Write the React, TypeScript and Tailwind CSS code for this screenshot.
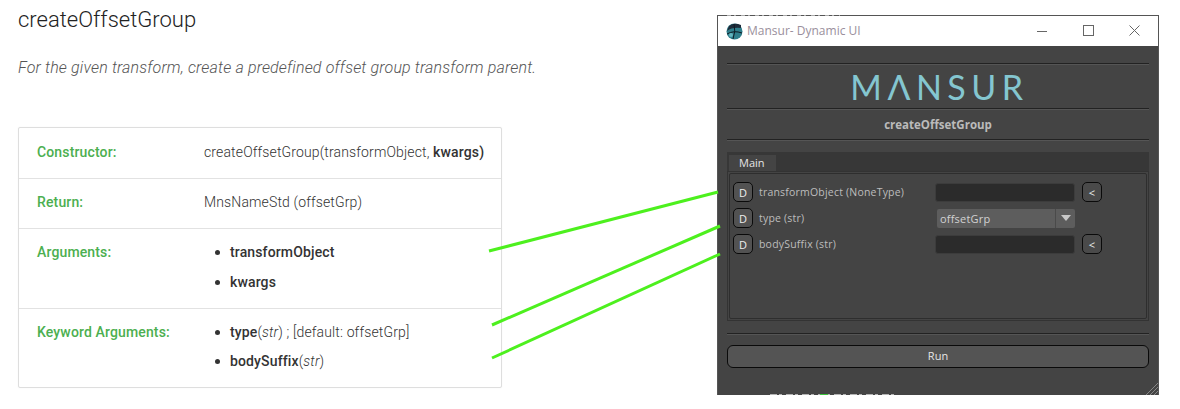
const roboto = "font-['Roboto',sans-serif]";
const ui = "font-['Open_Sans',sans-serif]";

function Bullet({ children }: { children: React.ReactNode }) {
  return (
    <li className="flex items-center h-[20px]">
      <span className="w-[5px] h-[5px] rounded-full bg-[#333] ml-[-2px] mr-[10px]" />
      <span>{children}</span>
    </li>
  );
}

function DocRow({ label, height, top, children, border = true }: { label: string; height: string; top: string; children: React.ReactNode; border?: boolean }) {
  return (
    <div className={`flex pl-[18px] ${height} ${top} ${border ? "border-b border-[#e2e2e2]" : ""}`}>
      <div className="w-[167px] shrink-0 text-[14px] leading-[20px] tracking-[0.14px] font-medium text-[#4caf50]">{label}</div>
      <div className="text-[14px] leading-[20px] tracking-[0.14px] font-light text-[#333]">{children}</div>
    </div>
  );
}

function DocPanel() {
  return (
    <section className={`w-[717px] shrink-0 pl-[18px] ${roboto}`}>
      <h1 className="mt-[7px] text-[22px] leading-[26px] font-light text-[#222]">createOffsetGroup</h1>
      <p className="mt-[23px] text-[16px] leading-[24px] tracking-[0.16px] font-light italic text-[#555]">
        For the given transform, create a predefined offset group transform parent.
      </p>
      <div className="mt-[47px] w-[484px] h-[261px] border border-[#dedede] rounded-[2px] shadow-[0_0_1px_rgba(0,0,0,0.1)]">
        <DocRow label="Constructor:" height="h-[51px]" top="pt-[14px]">
          createOffsetGroup(transformObject, <b className="font-medium">kwargs)</b>
        </DocRow>
        <DocRow label="Return:" height="h-[50px]" top="pt-[13px]">
          MnsNameStd (offsetGrp)
        </DocRow>
        <DocRow label="Arguments:" height="h-[80px]" top="pt-[13px]">
          <ul className="flex flex-col gap-[10px] pl-[13px] font-medium">
            <Bullet>transformObject</Bullet>
            <Bullet>kwargs</Bullet>
          </ul>
        </DocRow>
        <DocRow label="Keyword Arguments:" height="h-[78px]" top="pt-[13px]" border={false}>
          <ul className="flex flex-col gap-[9px] pl-[13px]">
            <Bullet>
              <b className="font-medium">type</b>(<i>str</i>) ; [default: offsetGrp]
            </Bullet>
            <Bullet>
              <b className="font-medium">bodySuffix</b>(<i>str</i>)
            </Bullet>
          </ul>
        </DocRow>
      </div>
    </section>
  );
}

function Sep({ className }: { className: string }) {
  return <div className={`h-[2px] border-t border-[#222] bg-[#555] ${className}`} />;
}

function DButton() {
  return (
    <button className="w-[20px] h-[20px] shrink-0 rounded-[5px] border border-[#0a0a0a] bg-[#525252] text-[11px] leading-none text-[#eee]">D</button>
  );
}

function ArrowButton() {
  return (
    <button className="ml-[7px] w-[20px] h-[20px] rounded-[5px] border border-[#0a0a0a] bg-[#4a4a4a] text-[11px] leading-none text-[#eee]">&lt;</button>
  );
}

function ParamRow({ label, children }: { label: string; children: React.ReactNode }) {
  return (
    <div className="flex items-center h-[20px]">
      <DButton />
      <span className="ml-[6px] w-[177px] pt-[2px] text-[10.5px] tracking-[0.2px] text-[#bdbdbd]">{label}</span>
      {children}
    </div>
  );
}

function TextField() {
  return <div className="ml-[-1px] w-[140px] h-[19px] rounded-[3px] border border-[#3c3c3c] bg-[#2b2b2b]" />;
}

function TitleBar() {
  return (
    <div className="h-[30px] bg-white flex items-center pl-[8px]">
      <svg width="17" height="17" viewBox="0 0 17 17">
        <circle cx="8.5" cy="8.5" r="8" fill="#2f7f8c" />
        <path d="M1 8 Q6 4 15 5 L15 2 Q8 -1 3 3Z" fill="#1d2b3a" />
        <path d="M8 1 Q10 8 7 16 M1 11 Q8 7 16 10" stroke="#0d1a24" strokeWidth="1" fill="none" />
        <circle cx="5" cy="12" r="2" fill="#63b5bf" />
      </svg>
      <span className="ml-[4px] text-[12px] text-[#9a8f9c] font-['Open_Sans',sans-serif]">Mansur- Dynamic UI</span>
      <div className="ml-auto flex items-center">
        <svg width="46" height="12" viewBox="0 0 46 12" stroke="#666" fill="none"><path d="M0 6.5H10" /></svg>
        <svg width="46" height="12" viewBox="0 0 46 12" stroke="#666" fill="none"><rect x="0.5" y="0.5" width="10" height="10" /></svg>
        <svg width="29" height="12" viewBox="0 0 29 12" stroke="#666" fill="none"><path d="M0.5 0.5L10.5 10.5M10.5 0.5L0.5 10.5" /></svg>
      </div>
    </div>
  );
}

function DynamicUiWindow() {
  return (
    <section className={`relative mt-[15px] w-[442px] h-[380px] border border-[#555] border-b-0 bg-[#444] ${ui}`}>
      <TitleBar />
      <div className="px-[9px] pt-[17px]">
        <Sep className="" />
        <div className="h-[43px] flex items-center justify-center">
          <span aria-label="MANSUR" className="ml-[3px] font-['Lato',sans-serif] font-normal text-[34px] leading-none tracking-[5.5px] text-[#84c6d0]">MΛNSUR</span>
        </div>
        <Sep className="" />
        <div className="h-[29px] flex items-center justify-center text-[11.5px] font-bold text-[#bbb]">createOffsetGroup</div>
        <Sep className="" />
        <div className="mt-[11px] h-[19px] bg-[#373737] pl-[2px] flex items-end">
          <div className="w-[47px] h-[16px] bg-[#444] text-[11px] leading-[16px] pl-[10px] text-[#e4e4e4]">Main</div>
        </div>
        <div className="h-[150px] border border-[#333] p-[1px]">
          <div className="h-full border border-[#2e2e2e] pl-[3px] pt-[8px] flex flex-col gap-[6px] rounded-[2px]">
            <ParamRow label="transformObject (NoneType)">
              <TextField />
              <ArrowButton />
            </ParamRow>
            <ParamRow label="type (str)">
              <div className="ml-[1px] w-[138px] h-[19px] flex bg-[#5d5d5d] rounded-[2px]">
                <span className="flex-1 pl-[3px] text-[11px] leading-[19px] tracking-[0.2px] text-[#d2d2d2]">offsetGrp</span>
                <span className="w-[20px] border-l border-[#4a4a4a] flex items-center justify-center">
                  <span className="w-0 h-0 border-x-[5px] border-x-transparent border-t-[6px] border-t-[#c8c8c8] mb-[1px]" />
                </span>
              </div>
            </ParamRow>
            <ParamRow label="bodySuffix (str)">
              <TextField />
              <ArrowButton />
            </ParamRow>
          </div>
        </div>
        <Sep className="mt-[12px]" />
        <button className="mt-[10px] w-full h-[23px] rounded-[6px] border border-[#0a0a0a] bg-[#545454] text-[11px] text-[#e6e6e6]">Run</button>
      </div>
      <svg className="absolute right-0 bottom-0" width="13" height="13" viewBox="0 0 13 13" stroke="#888" strokeWidth="1">
        <path d="M13 1L1 13M13 5L5 13M13 9L9 13" />
      </svg>
    </section>
  );
}

export default function App() {
  return (
    <div className="relative flex w-[1180px] h-[409px] overflow-hidden bg-white">
      <DocPanel />
      <DynamicUiWindow />
      {/* green arrows tying doc arguments to the widgets, plus the capture's edge bleed */}
      <svg className="absolute inset-0 pointer-events-none" width="1180" height="409" stroke="#4df01e" strokeWidth="3">
        <line x1="489" y1="251" x2="718" y2="192" />
        <line x1="492" y1="325" x2="720" y2="226" />
        <line x1="492" y1="358" x2="720" y2="254" />
        <line x1="770" y1="394.5" x2="895" y2="394.5" stroke="#b5b5b5" strokeWidth="1" strokeDasharray="7 2 3 4" />
        <line x1="820" y1="394.5" x2="828" y2="394.5" stroke="#3cc43c" strokeWidth="1" />
        <line x1="727" y1="15.5" x2="840" y2="15.5" stroke="#aaaaaa" strokeWidth="1" strokeDasharray="4 3 2 5" />
      </svg>
    </div>
  );
}
